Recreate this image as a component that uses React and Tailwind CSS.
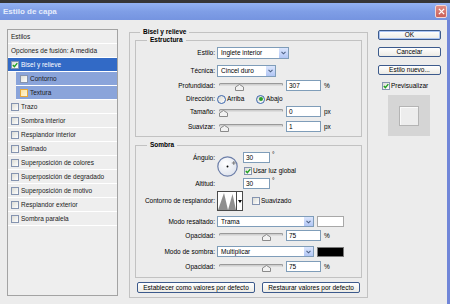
import React from "react";

function Check({ checked = false, hover = false, className = "" }) {
  return (
    <span
      className={`relative inline-block w-[8px] h-[8px] shrink-0 border ${
        hover ? "border-[#e8a93a] bg-linear-to-br from-[#fbe2a0] to-[#fff6d8]" : "border-[#8594b0] bg-linear-to-br from-[#dcdcd5] to-white"
      } ${className}`}
    >
      {checked && (
        <svg viewBox="0 0 6 6" className="absolute inset-0 w-[6px] h-[6px]">
          <path d="M0.8 2.9 L2.4 4.6 L5.3 1.1" stroke="#21a121" strokeWidth="1.4" fill="none" />
        </svg>
      )}
    </span>
  );
}

function Radio({ checked = false }) {
  return (
    <span className="w-[9px] h-[9px] shrink-0 rounded-full border border-[#3b66ad] bg-linear-to-br from-[#d8d8d2] to-white flex items-center justify-center">
      {checked && <span className="w-[4px] h-[4px] rounded-full bg-[#2aa22a]" />}
    </span>
  );
}

function ListRow({ children, className = "" }) {
  return <div className={`h-[14px] shrink-0 border-b border-white flex items-center ${className}`}>{children}</div>;
}

function Select({ w, text }) {
  return (
    <div className={`${w} h-[12px] bg-white border border-[#7f9db9] flex items-center`}>
      <span className="flex-1 pl-[3px] whitespace-nowrap overflow-hidden leading-[10px]">{text}</span>
      <span className="w-[10px] h-full bg-linear-to-b from-[#dbe6fd] to-[#b2c6f4] border-l border-white flex items-center justify-center">
        <svg viewBox="0 0 6 4" className="w-[5px] h-[4px]">
          <path d="M0.6 0.6 L3 3 L5.4 0.6" stroke="#4d6185" strokeWidth="1.3" fill="none" />
        </svg>
      </span>
    </div>
  );
}

function Input({ w = "w-[35px]", value }) {
  return (
    <div className={`${w} h-[11px] bg-white border border-[#7f9db9] flex items-center pl-[2px] leading-[9px]`}>
      {value}
    </div>
  );
}

function Slider({ pos }) {
  return (
    <div className="relative w-[64px] h-[11px] ml-[2px] mr-[3px]">
      <div className="absolute left-0 right-0 top-[3px] h-[3px] border border-[#999999] border-b-[#dddddd] bg-[#cfcfcf] rounded-full" />
      <svg className={`absolute top-[4px] ${pos}`} width="9" height="7" viewBox="0 0 9 7">
        <path d="M0.5 6.5 V3 L4.5 0.5 L8.5 3 V6.5 Z" fill="#f2f2f2" stroke="#8a8a8a" />
      </svg>
    </div>
  );
}

function Label({ children }) {
  return <div className="w-[81px] pr-[2px] text-right whitespace-nowrap shrink-0">{children}</div>;
}

function XPButton({ children, className = "" }) {
  return (
    <div
      className={`border border-[#3c5a8c] rounded-[2px] bg-linear-to-b from-white to-[#ecebe5] flex items-center justify-center whitespace-nowrap leading-[8px] ${className}`}
    >
      {children}
    </div>
  );
}

export default function App() {
  return (
    <div className="w-[450px] h-[304px] overflow-hidden bg-[#2f2f2f] flex flex-col font-['Liberation_Sans',Arial,sans-serif] text-[6.5px] text-black leading-[8px]">
      <div className="h-[3px] shrink-0 bg-[#363636]" />
      {/* title bar */}
      <div className="h-[17px] shrink-0 bg-linear-to-b from-[#93b2f2] via-[#7f9ee6] to-[#7594e0] flex items-center justify-between pl-[3px] pr-[3px]">
        <span className="text-[8px] font-bold text-[#e4ebfb] leading-[10px]">Estilo de capa</span>
        <span className="w-[12px] h-[13px] rounded-[2px] border border-[#f3d6d3] bg-linear-to-b from-[#e08c84] to-[#c9605a] flex items-center justify-center">
          <svg viewBox="0 0 8 8" className="w-[7px] h-[7px]">
            <path d="M1 1 L7 7 M7 1 L1 7" stroke="#ffffff" strokeWidth="1.5" />
          </svg>
        </span>
      </div>
      {/* body */}
      <div className="flex-1 bg-[#ececec] border-r-[3px] border-[#7186d8] flex">
        {/* left list */}
        <div className="mt-[9px] ml-[7px] w-[111px] h-[267px] shrink-0 border border-[#a3a3a3] bg-[#eeeeee] flex flex-col text-[#1a1a1a]">
          <ListRow className="pl-[3px]">Estilos</ListRow>
          <ListRow className="pl-[3px]">Opciones de fusión: A medida</ListRow>
          <ListRow className="pl-[3px] bg-[#326ac6] text-white">
            <Check checked />
            <span className="ml-[2px]">Bisel y relieve</span>
          </ListRow>
          <ListRow className="ml-[8px] pl-[4px] bg-[#8aa4da]">
            <Check />
            <span className="ml-[2px]">Contorno</span>
          </ListRow>
          <ListRow className="ml-[8px] pl-[4px] bg-[#8aa4da]">
            <Check hover />
            <span className="ml-[2px]">Textura</span>
          </ListRow>
          {[
            "Trazo",
            "Sombra interior",
            "Resplandor interior",
            "Satinado",
            "Superposición de colores",
            "Superposición de degradado",
            "Superposición de motivo",
            "Resplandor exterior",
            "Sombra paralela",
          ].map((t) => (
            <ListRow key={t} className="pl-[3px]">
              <Check />
              <span className="ml-[2px]">{t}</span>
            </ListRow>
          ))}
        </div>

        {/* main panel */}
        <fieldset className="mt-[8px] ml-[11px] w-[239px] shrink-0 self-start border border-[#c2c2c2] px-[5px] pb-[4px] min-w-0">
          <legend className="ml-[5px] px-[3px] h-[8px] leading-[8px] font-bold">Bisel y relieve</legend>

          {/* Estructura */}
          <fieldset className="border border-[#c2c2c2] pb-[4px] min-w-0">
            <legend className="ml-[11px] px-[3px] h-[8px] leading-[8px] font-bold">Estructura</legend>
            <div className="flex items-center h-[12px] mt-[3px]">
              <Label>Estilo:</Label>
              <Select w="w-[72px]" text="Inglete interior" />
            </div>
            <div className="flex items-center h-[12px] mt-[6px]">
              <Label>Técnica:</Label>
              <Select w="w-[59px]" text="Cincel duro" />
            </div>
            <div className="flex items-center h-[11px] mt-[3px]">
              <Label>Profundidad:</Label>
              <Slider pos="left-[16px]" />
              <Input value="307" />
              <span className="ml-[3px]">%</span>
            </div>
            <div className="flex items-center h-[10px] mt-[3px]">
              <Label>Dirección:</Label>
              <div className="w-[39px] flex items-center">
                <Radio />
                <span className="ml-[1px]">Arriba</span>
              </div>
              <Radio checked />
              <span className="ml-[1px]">Abajo</span>
            </div>
            <div className="flex items-center h-[11px] mt-[2px]">
              <Label>Tamaño:</Label>
              <Slider pos="left-[0px]" />
              <Input value="0" />
              <span className="ml-[3px]">px</span>
            </div>
            <div className="flex items-center h-[11px] mt-[4px]">
              <Label>Suavizar:</Label>
              <Slider pos="left-[1px]" />
              <Input value="1" />
              <span className="ml-[3px]">px</span>
            </div>
          </fieldset>

          {/* Sombra */}
          <fieldset className="mt-[4px] border border-[#c2c2c2] pb-[5px] min-w-0">
            <legend className="ml-[11px] px-[3px] h-[8px] leading-[8px] font-bold">Sombra</legend>
            <div className="flex mt-[3px] h-[37px]">
              <div className="w-[81px] pr-[2px] text-right flex flex-col justify-between shrink-0">
                <div className="h-[11px] flex items-center justify-end">Ángulo:</div>
                <div className="h-[11px] flex items-center justify-end">Altitud:</div>
              </div>
              <svg className="mt-[4px] shrink-0" width="21" height="21" viewBox="0 0 21 21">
                <defs>
                  <radialGradient id="dial" cx="40%" cy="35%" r="70%">
                    <stop offset="0" stopColor="#ffffff" />
                    <stop offset="1" stopColor="#dde2ec" />
                  </radialGradient>
                </defs>
                <circle cx="10.5" cy="10.5" r="9.7" fill="url(#dial)" stroke="#6c7ea8" strokeWidth="1.2" />
                <circle cx="10.5" cy="10.5" r="0.95" fill="#000" />
                <path d="M16.8 5 V9 M14.8 7 H18.8" stroke="#555" strokeWidth="0.7" />
              </svg>
              <div className="ml-[5px] flex flex-col">
                <div className="flex items-center">
                  <Input w="w-[27px]" value="30" />
                  <span className="ml-[2px] self-start leading-[6px]">°</span>
                </div>
                <div className="flex items-center h-[9px] mt-[3px] ml-[1px]">
                  <Check checked />
                  <span className="ml-[1px]">Usar luz global</span>
                </div>
                <div className="flex items-center mt-[3px]">
                  <Input w="w-[27px]" value="30" />
                  <span className="ml-[2px] self-start leading-[6px]">°</span>
                </div>
              </div>
            </div>
            <div className="flex items-center h-[20px] mt-[2px]">
              <Label>Contorno de resplandor:</Label>
              <div className="flex h-[20px] border border-[#4a4a4a]">
                <svg width="18" height="18" viewBox="0 0 18 18" className="bg-white">
                  <path d="M0 18 L6 1 L10 18 Z" fill="#8e8e8e" />
                  <path d="M10 18 L14.5 2 L18 18 Z" fill="#8e8e8e" />
                </svg>
                <div className="w-[6px] bg-white border-l border-[#4a4a4a] flex items-center justify-center">
                  <svg width="4" height="3" viewBox="0 0 4 3">
                    <path d="M0 0 H4 L2 3 Z" fill="#000" />
                  </svg>
                </div>
              </div>
              <div className="ml-[9px] flex items-center">
                <Check />
                <span className="ml-[1px]">Suavizado</span>
              </div>
            </div>
            <div className="flex items-center h-[11px] mt-[5px]">
              <Label>Modo resaltado:</Label>
              <Select w="w-[97px] !h-[11px]" text="Trama" />
              <div className="ml-[3px] w-[27px] h-[11px] bg-white border border-[#a8a8a8]" />
            </div>
            <div className="flex items-center h-[11px] mt-[3px]">
              <Label>Opacidad:</Label>
              <Slider pos="left-[43px]" />
              <Input value="75" />
              <span className="ml-[3px]">%</span>
            </div>
            <div className="flex items-center h-[11px] mt-[5px]">
              <Label>Modo de sombra:</Label>
              <Select w="w-[97px] !h-[11px]" text="Multiplicar" />
              <div className="ml-[3px] w-[27px] h-[10px] bg-black border border-[#7a7a7a]" />
            </div>
            <div className="flex items-center h-[11px] mt-[4px]">
              <Label>Opacidad:</Label>
              <Slider pos="left-[43px]" />
              <Input value="75" />
              <span className="ml-[3px]">%</span>
            </div>
          </fieldset>

          <div className="flex gap-[7px] px-[2px] mt-[4px]">
            <XPButton className="w-[118px] h-[11px]">Establecer como valores por defecto</XPButton>
            <XPButton className="w-[98px] h-[11px]">Restaurar valores por defecto</XPButton>
          </div>
        </fieldset>

        {/* right column */}
        <div className="ml-[10px] w-[63px] shrink-0 flex flex-col">
          <XPButton className="mt-[10px] h-[10px] shadow-[inset_0_0_0_1px_#a9c4f3]">OK</XPButton>
          <XPButton className="mt-[7px] h-[10px]">Cancelar</XPButton>
          <XPButton className="mt-[8px] h-[10px]">Estilo nuevo...</XPButton>
          <div className="mt-[6px] ml-[4px] h-[9px] flex items-center">
            <Check checked />
            <span className="ml-[1px]">Previsualizar</span>
          </div>
          <div className="mt-[5px] ml-[10px] w-[42px] h-[41px] bg-[#d5d5d5] flex items-center justify-center">
            <div className="w-[20px] h-[20px] border border-[#b4b4b4] bg-[#ededed] shadow-[inset_1px_1px_0_#fafafa]" />
          </div>
        </div>
      </div>
    </div>
  );
}
